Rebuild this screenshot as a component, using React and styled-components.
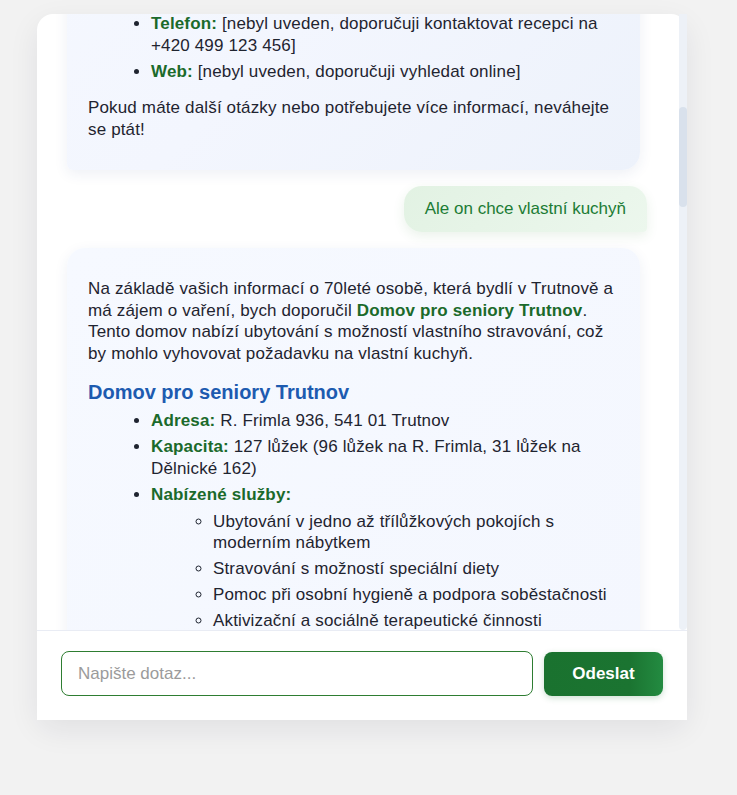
import React, { useLayoutEffect, useRef, useState } from 'react';
import styled, { createGlobalStyle } from 'styled-components';

const GlobalStyle = createGlobalStyle`
  html, body {
    margin: 0;
    background: #f2f2f2;
  }
  body {
    font-family: "Liberation Sans", Arial, Helvetica, sans-serif;
    font-size: 17px;
    color: #1f2430;
  }
`;

const Page = styled.div`
  padding: 14px 50px 40px 37px;
`;

const ChatCard = styled.div`
  width: 650px;
  height: 706px;
  display: flex;
  flex-direction: column;
  background: #fff;
  border-radius: 16px;
  box-shadow: 0 10px 30px rgba(20, 30, 50, 0.08);
`;

const Body = styled.div`
  flex: 1;
  min-height: 0;
  display: flex;
`;

const Messages = styled.div`
  flex: 1;
  min-width: 0;
  overflow-y: auto;
  scrollbar-width: none;
  padding: 20px 32px 20px 30px;
  display: flex;
  flex-direction: column;
  gap: 16px;
`;

const ScrollTrack = styled.div`
  width: 8px;
  flex-shrink: 0;
  background: #edf1f7;
  border-radius: 0 0 4px 4px;
`;

const ScrollThumb = styled.div`
  width: 8px;
  border-radius: 4px;
  background: #d9e1ec;
`;

const BotBubble = styled.div`
  align-self: flex-start;
  box-sizing: border-box;
  width: 573px;
  flex-shrink: 0;
  padding: 20px 21px;
  border-radius: 18px 18px 18px 6px;
  background: linear-gradient(135deg, #f6f9ff 0%, #f3f6fe 55%, #edf2fb 100%);
  box-shadow: 0 4px 14px rgba(40, 70, 130, 0.08);
  line-height: 21.6px;
  letter-spacing: 0.15px;
`;

const UserBubble = styled.div`
  align-self: flex-end;
  flex-shrink: 0;
  padding: 12px 21px;
  border-radius: 18px 18px 4px 18px;
  background: linear-gradient(135deg, #e2f2e3 0%, #ecf7ed 100%);
  color: #1c7c35;
  line-height: 21.6px;
  box-shadow: 0 4px 12px rgba(46, 125, 50, 0.1);
`;

const Text = styled.p`
  margin: 10px 0;
`;

const Heading = styled.h3`
  margin: 16px 0 5px;
  font-size: 20px;
  line-height: 25px;
  font-weight: 700;
  letter-spacing: 0;
  color: #1d5bb0;
`;

const List = styled.ul`
  margin: ${(p) => (p.$nested ? '5px 0 0' : '0 0 15px')};
  padding-left: ${(p) => (p.$nested ? '62px' : '63px')};
  list-style: ${(p) => (p.$nested ? 'circle' : 'disc')};
`;

const Item = styled.li`
  margin-bottom: 4.4px;
`;

const Label = styled.strong`
  color: #1b6a2b;
  font-weight: 700;
`;

const InputBar = styled.form`
  display: flex;
  align-items: center;
  gap: 11px;
  padding: 20px 24px 24px;
  border-top: 1px solid #e9ecf4;
  background: #fff;
`;

const Field = styled.input`
  flex: 1;
  height: 45px;
  box-sizing: border-box;
  padding: 0 16px;
  border: 1px solid #2e7d32;
  border-radius: 8px;
  font: inherit;
  font-size: 17px;
  color: #1f2430;
  outline: none;

  &::placeholder {
    color: #9b9b9b;
  }
`;

const SendButton = styled.button`
  width: 119px;
  height: 44px;
  border: none;
  border-radius: 8px;
  background: linear-gradient(90deg, #1a722f 0%, #1b7431 72%, #238b41 100%);
  color: #fff;
  font: inherit;
  font-size: 17px;
  font-weight: 700;
  box-shadow: 0 2px 6px rgba(27, 116, 48, 0.22);
  cursor: pointer;
`;

function Entry({ label, children }) {
  return (
    <Item>
      <Label>{label}</Label> {children}
    </Item>
  );
}

const otherHomes = [
  {
    name: 'Dům s pečovatelskou službou Trutnov',
    adresa: 'Na Struze 100, 541 01 Trutnov',
    kuchyn: 'ano, každý byt má vlastní kuchyňský kout',
    sluzby: 'pečovatelská služba, dovoz obědů, nákupy',
  },
  {
    name: 'Domov důchodců Úpice',
    adresa: 'Palackého 560, 542 32 Úpice',
    kuchyn: 'společná kuchyňka na každém patře',
    sluzby: 'celodenní strava, zdravotní péče, rehabilitace',
  },
  {
    name: 'Senior rezidence Hostinné',
    adresa: 'Nádražní 412, 543 71 Hostinné',
    kuchyn: 'ano, garsoniéry s vybavenou kuchyní',
    sluzby: 'úklid, praní prádla, volnočasové aktivity',
  },
  {
    name: 'Domov seniorů Dvůr Králové nad Labem',
    adresa: 'Sadová 2000, 544 01 Dvůr Králové nad Labem',
    kuchyn: 'cvičná kuchyňka v rámci aktivizace',
    sluzby: 'ubytování, strava, ošetřovatelská péče',
  },
  {
    name: 'Penzion pro seniory Žacléř',
    adresa: 'Rýchorské náměstí 10, 542 01 Žacléř',
    kuchyn: 'ano, malometrážní byty s kuchyňskou linkou',
    sluzby: 'pečovatelská služba na objednávku',
  },
  {
    name: 'Domov Dolní Kalná',
    adresa: 'Dolní Kalná 180, 543 74 Dolní Kalná',
    kuchyn: 'společná kuchyně pro klienty',
    sluzby: 'celoroční pobyt, zahrada, kulturní program',
  },
  {
    name: 'Dům s pečovatelskou službou Svoboda nad Úpou',
    adresa: 'Horská 520, 542 24 Svoboda nad Úpou',
    kuchyn: 'ano, byty 1+kk s kuchyňskou linkou',
    sluzby: 'pečovatelská služba, tísňové tlačítko',
  },
  {
    name: 'Domov pro seniory Vrchlabí',
    adresa: 'Komenského 1245, 543 01 Vrchlabí',
    kuchyn: 'společná kuchyňka v přízemí',
    sluzby: 'ubytování, strava, rehabilitace, kaple',
  },
  {
    name: 'Penzion Sluneční dvůr Jaroměř',
    adresa: 'Palackého 14, 551 01 Jaroměř',
    kuchyn: 'ano, v každém apartmánu',
    sluzby: 'úklid, doprava k lékaři, společné výlety',
  },
  {
    name: 'Domov Pod Krkonošemi Rtyně',
    adresa: 'Náchodská 301, 542 33 Rtyně v Podkrkonoší',
    kuchyn: 'malá kuchyňka na oddělení',
    sluzby: 'celodenní péče, terapie, zahrada',
  },
];

const questions = [
  'Jaká je čekací doba na přijetí?',
  'Je možné si vařit vlastní jídla a kde?',
  'Jak vypadají pokoje a co si mohu přivézt?',
  'Jaká je dostupnost lékaře a zdravotní sestry?',
  'Jaké aktivity domov během týdne nabízí?',
  'Jsou návštěvy omezeny nějakou dobou?',
  'Jak se řeší strava při zvláštních dietách?',
  'Je v okolí obchod, lékárna a zastávka autobusu?',
  'Lze si vzít vlastní nábytek a domácího mazlíčka?',
  'Jak probíhá zkušební pobyt?',
];

export default function App() {
  const listRef = useRef(null);
  const anchorRef = useRef(null);
  const [thumb, setThumb] = useState({ top: 0, height: 0 });

  useLayoutEffect(() => {
    const list = listRef.current;
    const anchor = anchorRef.current;
    list.scrollTop +=
      anchor.getBoundingClientRect().top - list.getBoundingClientRect().top - 172;
    const { scrollTop, scrollHeight, clientHeight } = list;
    const height = Math.max(30, (clientHeight * clientHeight) / scrollHeight);
    const top = (scrollTop / (scrollHeight - clientHeight)) * (clientHeight - height);
    setThumb({ top, height });
  }, []);

  return (
    <Page>
      <GlobalStyle />
      <ChatCard>
        <Body>
          <Messages ref={listRef}>
            <BotBubble>
              <Text>
                Dobrý den! Jsem asistent pro vyhledávání sociálních služeb v
                Královéhradeckém kraji. Napište mi, koho hledáte a s čím vám mohu
                pomoci.
              </Text>
            </BotBubble>
            <UserBubble>Hledám ubytování pro babičku v Trutnově</UserBubble>
            <BotBubble>
              <Text>
                Na základě vašeho dotazu jsem našel ubytování, které by mohlo odpovídat
                vašim požadavkům:
              </Text>
              <Heading>Penzion Na Horním Předměstí</Heading>
              <List>
                <Entry label="Adresa:">Horská 112, 541 01 Trutnov</Entry>
                <Entry label="Typ ubytování:">penzion s možností dlouhodobého pobytu</Entry>
                <Entry label="Kapacita:">18 pokojů</Entry>
                <Entry label="Vybavení:">
                  <List $nested>
                    <Item>Bezbariérový přístup do přízemí</Item>
                    <Item>Pokoje s vlastním sociálním zařízením</Item>
                    <Item>Výtah a madla v koupelnách</Item>
                    <Item>Společenská místnost a zahrada</Item>
                  </List>
                </Entry>
                <Entry label="Cena:">[nebyla uvedena, liší se podle délky pobytu]</Entry>
                <Entry label="Telefon:">
                  [nebyl uveden, doporučuji kontaktovat recepci na +420 499 123 456]
                </Entry>
                <Entry label="Web:">[nebyl uveden, doporučuji vyhledat online]</Entry>
              </List>
              <Text>
                Pokud máte další otázky nebo potřebujete více informací, neváhejte se ptát!
              </Text>
            </BotBubble>
            <UserBubble ref={anchorRef}>Ale on chce vlastní kuchyň</UserBubble>
            <BotBubble>
              <Text>
                Na základě vašich informací o 70leté osobě, která bydlí v Trutnově a má
                zájem o vaření, bych doporučil <Label>Domov pro seniory Trutnov</Label>.
                Tento domov nabízí ubytování s možností vlastního stravování, což by mohlo
                vyhovovat požadavku na vlastní kuchyň.
              </Text>
              <Heading>Domov pro seniory Trutnov</Heading>
              <List>
                <Entry label="Adresa:">R. Frimla 936, 541 01 Trutnov</Entry>
                <Entry label="Kapacita:">
                  127 lůžek (96 lůžek na R. Frimla, 31 lůžek na Dělnické 162)
                </Entry>
                <Entry label="Nabízené služby:">
                  <List $nested>
                    <Item>Ubytování v jedno až třílůžkových pokojích s moderním nábytkem</Item>
                    <Item>Stravování s možností speciální diety</Item>
                    <Item>Pomoc při osobní hygieně a podpora soběstačnosti</Item>
                    <Item>Aktivizační a sociálně terapeutické činnosti</Item>
                    <Item>Zdravotní a ošetřovatelská péče</Item>
                    <Item>Kuchyňky na odděleních pro přípravu vlastních jídel</Item>
                  </List>
                </Entry>
                <Entry label="Telefon:">
                  [nebyl uveden, doporučuji kontaktovat domov přímo]
                </Entry>
                <Entry label="Web:">[nebyl uveden, doporučuji vyhledat online]</Entry>
              </List>
              <Heading>Proč právě tento domov?</Heading>
              <Text>
                Domov pro seniory Trutnov umožňuje klientům zapojit se do přípravy jídel a
                využívat kuchyňky na odděleních. Senior si tak může uvařit podle svých
                zvyklostí a zároveň má k dispozici odbornou péči, kdykoli ji potřebuje.
              </Text>
              <Heading>Další možnosti v okolí</Heading>
              {otherHomes.map((home) => (
                <React.Fragment key={home.name}>
                  <Text>
                    <Label>{home.name}</Label>
                  </Text>
                  <List>
                    <Entry label="Adresa:">{home.adresa}</Entry>
                    <Entry label="Vlastní kuchyň:">{home.kuchyn}</Entry>
                    <Entry label="Služby:">{home.sluzby}</Entry>
                  </List>
                </React.Fragment>
              ))}
              <Text>
                Pro samostatné vaření je nejvhodnější dům s pečovatelskou službou, kde má
                každý byt vlastní kuchyň. Doporučuji domluvit si osobní návštěvu.
              </Text>
            </BotBubble>
            <UserBubble>A kolik to stojí?</UserBubble>
            <BotBubble>
              <Text>Ceny se liší podle typu pokoje a míry potřebné péče. Orientačně:</Text>
              <Heading>Domov pro seniory Trutnov</Heading>
              <List>
                <Entry label="Jednolůžkový pokoj:">přibližně 480 Kč za den</Entry>
                <Entry label="Dvoulůžkový pokoj:">přibližně 440 Kč za den</Entry>
                <Entry label="Strava:">cca 200–250 Kč za den (podle diety)</Entry>
                <Entry label="Příspěvek na péči:">hradí se dle stupně závislosti</Entry>
              </List>
              <Heading>Dům s pečovatelskou službou</Heading>
              <List>
                <Entry label="Nájemné:">
                  podle velikosti bytu, obvykle 3 000–5 000 Kč měsíčně
                </Entry>
                <Entry label="Pečovatelská služba:">hradí se podle čerpaných úkonů</Entry>
              </List>
              <Text>
                Přesné ceny doporučuji ověřit přímo v zařízení, protože se každoročně
                upravují. Mohu vám pomoci připravit seznam otázek pro první návštěvu?
              </Text>
            </BotBubble>
            <UserBubble>Ano, prosím</UserBubble>
            <BotBubble>
              <Text>Zde je seznam otázek, které se vyplatí položit při návštěvě:</Text>
              <List>
                {questions.map((q) => (
                  <Item key={q}>{q}</Item>
                ))}
              </List>
              <Text>Přeji hodně štěstí při výběru!</Text>
            </BotBubble>
          </Messages>
          <ScrollTrack>
            <ScrollThumb style={{ marginTop: thumb.top, height: thumb.height }} />
          </ScrollTrack>
        </Body>
        <InputBar onSubmit={(e) => e.preventDefault()}>
          <Field placeholder="Napište dotaz..." />
          <SendButton type="submit">Odeslat</SendButton>
        </InputBar>
      </ChatCard>
    </Page>
  );
}
